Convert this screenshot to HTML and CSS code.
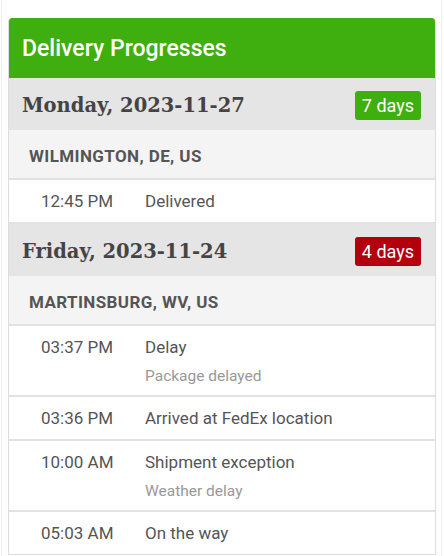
FILE: index.html
```html
<!DOCTYPE html>
<html lang="en">
<head>
  <meta charset="UTF-8" />
  <title>Delivery Progresses</title>
  <link rel="stylesheet" href="styles.css">
</head>
<body>
  <div class="page">
    <!-- tracking card -->
    <div class="card">
      <h2 class="card-title">Delivery Progresses</h2>

      <div class="day-head">
        <span class="day-date">Monday, 2023-11-27</span>
        <span class="badge badge-green">7 days</span>
      </div>
      <div class="location">WILMINGTON, DE, US</div>
      <div class="event">
        <span class="event-time">12:45 PM</span>
        <div class="event-info">
          <div class="event-status">Delivered</div>
        </div>
      </div>

      <div class="day-head">
        <span class="day-date">Friday, 2023-11-24</span>
        <span class="badge badge-red">4 days</span>
      </div>
      <div class="location">MARTINSBURG, WV, US</div>
      <div class="event">
        <span class="event-time">03:37 PM</span>
        <div class="event-info">
          <div class="event-status">Delay</div>
          <div class="event-note">Package delayed</div>
        </div>
      </div>
      <div class="event">
        <span class="event-time">03:36 PM</span>
        <div class="event-info">
          <div class="event-status">Arrived at FedEx location</div>
        </div>
      </div>
      <div class="event">
        <span class="event-time">10:00 AM</span>
        <div class="event-info">
          <div class="event-status">Shipment exception</div>
          <div class="event-note">Weather delay</div>
        </div>
      </div>
      <div class="event">
        <span class="event-time">05:03 AM</span>
        <div class="event-info">
          <div class="event-status">On the way</div>
        </div>
      </div>
    </div>
  </div>
</body>
</html>
```

FILE: styles.css
```css
/* base */
html, body {
  margin: 0;
  padding: 0;
  background: #fff;
  font-family: Roboto, "Liberation Sans", Arial, sans-serif;
  color: #555;
  overflow: hidden;
}
*, *::before, *::after {
  box-sizing: border-box;
}

/* outer page frame */
.page {
  margin: 0 2px 0 1px;
  border-left: 1px solid #eee;
  border-right: 1px solid #eee;
  padding: 18px 5px 0 6px;
  min-height: 556px;
}

/* card */
.card {
  border: 1px solid #ddd;
  border-top: none;
  border-radius: 4px 4px 0 0;
  overflow: hidden;
}
.card-title {
  margin: 0 -1px;
  height: 60px;
  padding: 1px 14px 0;
  display: flex;
  align-items: center;
  background: #3fae0f;
  color: #fff;
  font-size: 23px;
  font-weight: 500;
  border-radius: 4px 4px 0 0;
}

/* day header */
.day-head {
  height: 52px;
  display: flex;
  align-items: center;
  justify-content: space-between;
  padding: 2px 14px 0 13px;
  background: #e5e5e5;
}
.day-date {
  font-family: "DejaVu Serif", "Liberation Serif", serif;
  font-weight: bold;
  font-size: 19.5px;
  color: #444;
}
.badge {
  height: 29px;
  display: flex;
  align-items: center;
  padding: 0 7px;
  border-radius: 3px;
  color: #fff;
  font-size: 18px;
}
.badge-green { background: #3fae0f; }
.badge-red { background: #b3000f; }

/* location */
.location {
  height: 50px;
  display: flex;
  align-items: center;
  padding: 4px 0 0 20px;
  background: #f4f4f4;
  border-bottom: 2px solid #e2e2e2;
  font-size: 17px;
  font-weight: bold;
  letter-spacing: 0.4px;
  color: #555;
}

/* events */
.event {
  display: grid;
  grid-template-columns: 104px 1fr;
  padding: 9px 0 9px 32px;
  border-bottom: 2px solid #e2e2e2;
  font-size: 17px;
  line-height: 24px;
}
.event:last-child {
  border-bottom: none;
}
.event-note {
  margin: 5px 0 -2px;
  font-size: 15.5px;
  color: #999;
}
```
